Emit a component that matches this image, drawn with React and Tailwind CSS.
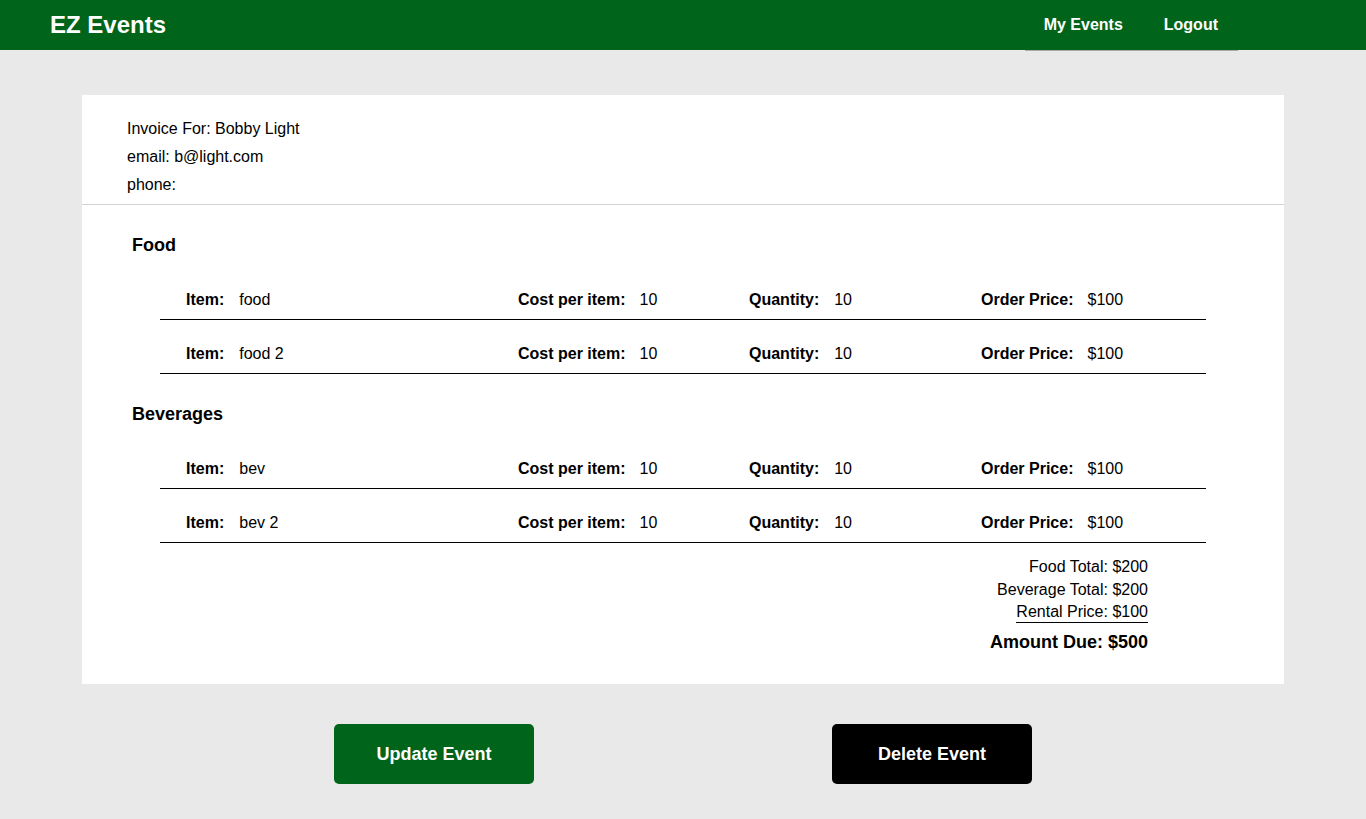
const foodItems = [
  { name: 'food', cost: 10, qty: 10 },
  { name: 'food 2', cost: 10, qty: 10 },
];

const bevItems = [
  { name: 'bev', cost: 10, qty: 10 },
  { name: 'bev 2', cost: 10, qty: 10 },
];

const LineItem = ({ item }) => (
  <div className="grid grid-cols-[332px_231px_232px_1fr] pl-[26px] pt-[23px] pb-[8px] border-b border-black leading-[22px] text-[16px]">
    <div className="flex gap-[15px]">
      <span className="font-bold">Item:</span>
      <span>{item.name}</span>
    </div>
    <div className="flex gap-[14px]">
      <span className="font-bold">Cost per item:</span>
      <span>{item.cost}</span>
    </div>
    <div className="flex gap-[15px]">
      <span className="font-bold">Quantity:</span>
      <span>{item.qty}</span>
    </div>
    <div className="flex gap-[14px]">
      <span className="font-bold">Order Price:</span>
      <span>${item.cost * item.qty}</span>
    </div>
  </div>
);

const Section = ({ title, items }) => (
  <div>
    <h2 className="mt-[28px] pl-[50px] text-[18px] leading-[24px] font-bold">{title}</h2>
    <div className="mx-[78px] mt-[9px]">
      {items.map((item) => (
        <LineItem key={item.name} item={item} />
      ))}
    </div>
  </div>
);

const App = () => {
  const sum = (list) => list.reduce((t, i) => t + i.cost * i.qty, 0);
  const foodTotal = sum(foodItems);
  const bevTotal = sum(bevItems);
  const rental = 100;

  return (
    <div
      className="min-h-screen bg-[#e9e9e9] text-black"
      style={{ fontFamily: '"Liberation Sans", Arial, sans-serif' }}
    >
      {/* Navbar */}
      <header className="h-[50px] bg-[#00641a] flex items-start justify-between pl-[50px]">
        <h1 className="text-white font-bold text-[24px] leading-[50px]">EZ Events</h1>
        <nav className="mr-[128px] h-[51px] border-b border-[#a9a9a9] flex items-start gap-[41px] pl-[19px] pr-[20px]">
          <a className="text-white font-bold text-[16px] leading-[50px]">My Events</a>
          <a className="text-white font-bold text-[16px] leading-[50px]">Logout</a>
        </nav>
      </header>

      <main className="pt-[45px] pb-[35px]">
        <div className="mx-[82px] bg-white pb-[30px]">
          <div className="pl-[45px] pt-[20px] pb-[5px] border-b border-[#d3d3d3] text-[16px] leading-[28px]">
            <p>Invoice For: Bobby Light</p>
            <p>email: b@light.com</p>
            <p>phone:</p>
          </div>

          <Section title="Food" items={foodItems} />
          <Section title="Beverages" items={bevItems} />

          <div className="flex flex-col items-end pr-[136px] mt-[12px] text-[16px]">
            <p className="leading-[23px]">Food Total: ${foodTotal}</p>
            <p className="leading-[23px]">Beverage Total: ${bevTotal}</p>
            <p className="leading-[21px] border-b border-black">Rental Price: ${rental}</p>
            <p className="mt-[7px] leading-[24px] font-bold text-[18px]">
              Amount Due: ${foodTotal + bevTotal + rental}
            </p>
          </div>
        </div>

        <div className="flex justify-center gap-[298px] mt-[40px]">
          <button className="w-[200px] h-[60px] rounded-[5px] bg-[#00641a] text-white font-bold text-[18px]">
            Update Event
          </button>
          <button className="w-[200px] h-[60px] rounded-[5px] bg-black text-white font-bold text-[18px]">
            Delete Event
          </button>
        </div>
      </main>
    </div>
  );
};

export default App;
